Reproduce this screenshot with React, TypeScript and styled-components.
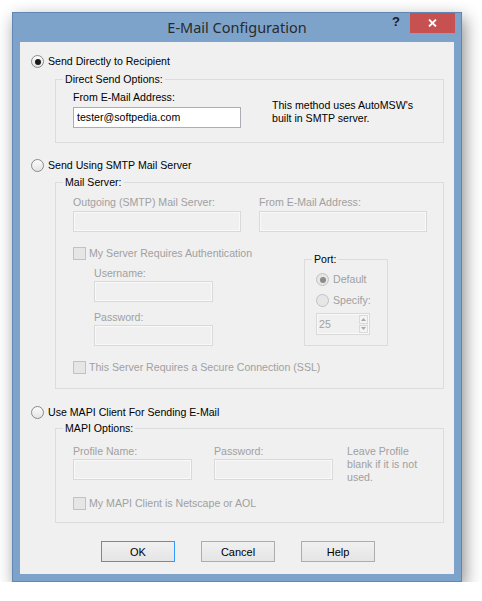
import React from 'react';
import styled, { createGlobalStyle } from 'styled-components';

const GlobalStyle = createGlobalStyle`
  html, body {
    margin: 0;
    padding: 0;
    background: #ffffff;
  }
  body {
    font-family: "Liberation Sans", Arial, sans-serif;
    font-size: 10.6px;
    color: #000;
  }
`

const Page = styled.div`
  padding: 12px 0 0 12px;
`

const Window = styled.div`
  width: 450px;
  box-sizing: border-box;
  border: 1px solid #6386b0;
  background: #7ea3cb;
  padding: 0 7px 7px 7px;
  box-shadow: 3px 6px 16px rgba(0, 0, 0, 0.45);
  display: flex;
  flex-direction: column;
`

const TitleBar = styled.div`
  height: 29px;
  display: grid;
  grid-template-columns: 1fr auto 1fr;
  align-items: center;
`

const Title = styled.div`
  grid-column: 2;
  font-family: "Noto Sans", "Open Sans", sans-serif;
  font-size: 14.5px;
  color: #2a2a2a;
  padding-bottom: 1px;
`

const Caps = styled.div`
  grid-column: 3;
  align-self: start;
  justify-self: end;
  display: flex;
  margin-right: -1px;
`

const HelpCap = styled.div`
  width: 28px;
  height: 20px;
  display: flex;
  align-items: center;
  justify-content: center;
  font-family: "Liberation Sans", Arial, sans-serif;
  font-weight: bold;
  font-size: 13px;
  color: #1a1a1a;
  padding-bottom: 4px;
  box-sizing: border-box;
`

const CloseCap = styled.div`
  width: 45px;
  height: 20px;
  background: #c75050;
  display: flex;
  align-items: center;
  justify-content: center;
`

const Client = styled.div`
  background: #f0f0f0;
  padding: 13px 10px 12px 11px;
  display: flex;
  flex-direction: column;
`

const OptionRow = styled.label<{ $mt?: number; $disabled?: boolean }>`
  display: flex;
  align-items: center;
  gap: 4px;
  height: 13px;
  line-height: 13px;
  margin-top: ${(p) => p.$mt ?? 0}px;
  white-space: nowrap;
  color: ${(p) => (p.$disabled ? '#a0a0a0' : '#000')};
`

const Radio = styled.span<{ $checked?: boolean; $disabled?: boolean }>`
  width: 13px;
  height: 13px;
  box-sizing: border-box;
  border-radius: 50%;
  flex-shrink: 0;
  border: 1px solid ${(p) => (p.$disabled ? '#c2c2c2' : '#8a8a8a')};
  background: ${(p) => (p.$disabled ? '#e6e6e6' : 'linear-gradient(#fbfbfb, #e4e4e4)')};
  display: flex;
  align-items: center;
  justify-content: center;

  &::after {
    content: '';
    display: ${(p) => (p.$checked ? 'block' : 'none')};
    width: 6px;
    height: 6px;
    border-radius: 50%;
    background: ${(p) => (p.$disabled ? '#8c8c8c' : '#1a1a1a')};
  }
`

const Check = styled.span`
  width: 13px;
  height: 13px;
  box-sizing: border-box;
  flex-shrink: 0;
  border: 1px solid #c2c2c2;
  background: #e6e6e6;
  margin-right: -1px;
`

const Group = styled.div<{ $mt: number; $pt: number; $pb: number }>`
  position: relative;
  margin: ${(p) => p.$mt}px 0 0 24px;
  border: 1px solid #dcdcdc;
  padding: ${(p) => p.$pt}px 10px ${(p) => p.$pb}px 17px;
`

const Caption = styled.span`
  position: absolute;
  top: -7px;
  left: 7px;
  padding: 0 2px;
  line-height: 13px;
  background: #f0f0f0;
  color: #000;
  white-space: nowrap;
`

const Row = styled.div<{ $gap?: number; $mt?: number }>`
  display: flex;
  align-items: flex-start;
  gap: ${(p) => p.$gap ?? 0}px;
  margin-top: ${(p) => p.$mt ?? 0}px;
`

const Field = styled.div<{ $indent?: number; $mt?: number }>`
  display: flex;
  flex-direction: column;
  margin-left: ${(p) => p.$indent ?? 0}px;
  margin-top: ${(p) => p.$mt ?? 0}px;
`

const FieldLabel = styled.span<{ $disabled?: boolean; $mb?: number }>`
  line-height: 13px;
  height: 13px;
  margin-bottom: ${(p) => p.$mb ?? 2}px;
  color: ${(p) => (p.$disabled ? '#a0a0a0' : '#000')};
  white-space: nowrap;
`

const TextBox = styled.div<{ $w: number; $disabled?: boolean }>`
  width: ${(p) => p.$w}px;
  height: 21px;
  box-sizing: border-box;
  border: 1px solid ${(p) => (p.$disabled ? '#d9d9d9' : '#abadb3')};
  background: ${(p) => (p.$disabled ? '#f0f0f0' : '#ffffff')};
  box-shadow: ${(p) => (p.$disabled ? 'inset 0 0 0 1px #f9f9f9' : 'none')};
  padding: 0 3px;
  line-height: 19px;
  white-space: nowrap;
`

const Note = styled.div<{ $disabled?: boolean; $ml: number; $mt: number; $mb?: number }>`
  margin-left: ${(p) => p.$ml}px;
  margin-top: ${(p) => p.$mt}px;
  margin-bottom: ${(p) => p.$mb ?? 0}px;
  line-height: 13px;
  white-space: nowrap;
  color: ${(p) => (p.$disabled ? '#a0a0a0' : '#000')};
`

const AuthColumn = styled.div`
  width: 231px;
  display: flex;
  flex-direction: column;
`

const PortGroup = styled.div`
  position: relative;
  margin-top: 12px;
  width: 84px;
  height: 87px;
  box-sizing: border-box;
  border: 1px solid #dcdcdc;
  padding: 13px 0 0 11px;
  display: flex;
  flex-direction: column;
`

const Spin = styled.div`
  margin-top: 6px;
  width: 54px;
  height: 22px;
  box-sizing: border-box;
  border: 1px solid #d9d9d9;
  box-shadow: inset 0 0 0 1px #f9f9f9;
  display: flex;
  color: #a0a0a0;
  line-height: 20px;

  span {
    flex: 1;
    padding-left: 2px;
  }
`

const SpinButtons = styled.div`
  width: 9px;
  display: flex;
  flex-direction: column;
  margin: 1px 1px 1px 0;
  gap: 1px;
`

const SpinBtn = styled.div`
  flex: 1;
  border: 1px solid #dadada;
  background: #f4f4f4;
  display: flex;
  align-items: center;
  justify-content: center;
`

const ButtonRow = styled.div`
  display: flex;
  gap: 26px;
  margin: 18px 0 0 70px;
`

const Button = styled.div<{ $default?: boolean }>`
  width: 74px;
  height: 21px;
  box-sizing: border-box;
  border: 1px solid ${(p) => (p.$default ? '#3399ff' : '#adadad')};
  background: linear-gradient(#f0f0f0, #e5e5e5);
  display: flex;
  align-items: center;
  justify-content: center;
  font-size: 11px;
`

const Arrow: React.FC<{ up?: boolean }> = ({ up }) => (
  <svg width="5" height="3" viewBox="0 0 5 3">
    <path d={up ? 'M0 3 L2.5 0 L5 3 Z' : 'M0 0 L2.5 3 L5 0 Z'} fill="#a8a8a8" />
  </svg>
)

const App: React.FC = () => {
  return (
    <Page>
      <GlobalStyle />
      <Window>
        <TitleBar>
          <Title>E-Mail Configuration</Title>
          <Caps>
            <HelpCap>?</HelpCap>
            <CloseCap>
              <svg width="9" height="8" viewBox="0 0 9 8">
                <path d="M1 0.5 L8 7.5 M8 0.5 L1 7.5" stroke="#ffffff" strokeWidth="1.8" />
              </svg>
            </CloseCap>
          </Caps>
        </TitleBar>

        <Client>
          <OptionRow>
            <Radio $checked />
            Send Directly to Recipient
          </OptionRow>
          <Group $mt={11} $pt={11} $pb={14}>
            <Caption>Direct Send Options:</Caption>
            <Row>
              <Field>
                <FieldLabel $mb={3}>From E-Mail Address:</FieldLabel>
                <TextBox $w={168}>tester@softpedia.com</TextBox>
              </Field>
              <Note $ml={31} $mt={8}>
                This method uses AutoMSW's<br />built in SMTP server.
              </Note>
            </Row>
          </Group>

          <OptionRow $mt={16}>
            <Radio />
            Send Using SMTP Mail Server
          </OptionRow>
          <Group $mt={10} $pt={13} $pb={14}>
            <Caption>Mail Server:</Caption>
            <Row $gap={18}>
              <Field>
                <FieldLabel $disabled>Outgoing (SMTP) Mail Server:</FieldLabel>
                <TextBox $w={168} $disabled />
              </Field>
              <Field>
                <FieldLabel $disabled>From E-Mail Address:</FieldLabel>
                <TextBox $w={168} $disabled />
              </Field>
            </Row>
            <Row $mt={15}>
              <AuthColumn>
                <OptionRow $disabled>
                  <Check />
                  My Server Requires Authentication
                </OptionRow>
                <Field $indent={21} $mt={7}>
                  <FieldLabel $disabled $mb={1}>Username:</FieldLabel>
                  <TextBox $w={119} $disabled />
                </Field>
                <Field $indent={21} $mt={9}>
                  <FieldLabel $disabled $mb={1}>Password:</FieldLabel>
                  <TextBox $w={119} $disabled />
                </Field>
              </AuthColumn>
              <PortGroup>
                <Caption>Port:</Caption>
                <OptionRow $disabled>
                  <Radio $checked $disabled />
                  Default
                </OptionRow>
                <OptionRow $disabled $mt={8}>
                  <Radio $disabled />
                  Specify:
                </OptionRow>
                <Spin>
                  <span>25</span>
                  <SpinButtons>
                    <SpinBtn><Arrow up /></SpinBtn>
                    <SpinBtn><Arrow /></SpinBtn>
                  </SpinButtons>
                </Spin>
              </PortGroup>
            </Row>
            <OptionRow $disabled $mt={15}>
              <Check />
              This Server Requires a Secure Connection (SSL)
            </OptionRow>
          </Group>

          <OptionRow $mt={17}>
            <Radio />
            Use MAPI Client For Sending E-Mail
          </OptionRow>
          <Group $mt={9} $pt={16} $pb={12}>
            <Caption>MAPI Options:</Caption>
            <Row $gap={22}>
              <Field>
                <FieldLabel $disabled $mb={1}>Profile Name:</FieldLabel>
                <TextBox $w={119} $disabled />
              </Field>
              <Field>
                <FieldLabel $disabled $mb={1}>Password:</FieldLabel>
                <TextBox $w={119} $disabled />
              </Field>
              <Note $disabled $ml={-8} $mt={0} $mb={-4}>
                Leave Profile<br />blank if it is not<br />used.
              </Note>
            </Row>
            <OptionRow $disabled $mt={17}>
              <Check />
              My MAPI Client is Netscape or AOL
            </OptionRow>
          </Group>

          <ButtonRow>
            <Button $default>OK</Button>
            <Button>Cancel</Button>
            <Button>Help</Button>
          </ButtonRow>
        </Client>
      </Window>
    </Page>
  );
};

export default App;
